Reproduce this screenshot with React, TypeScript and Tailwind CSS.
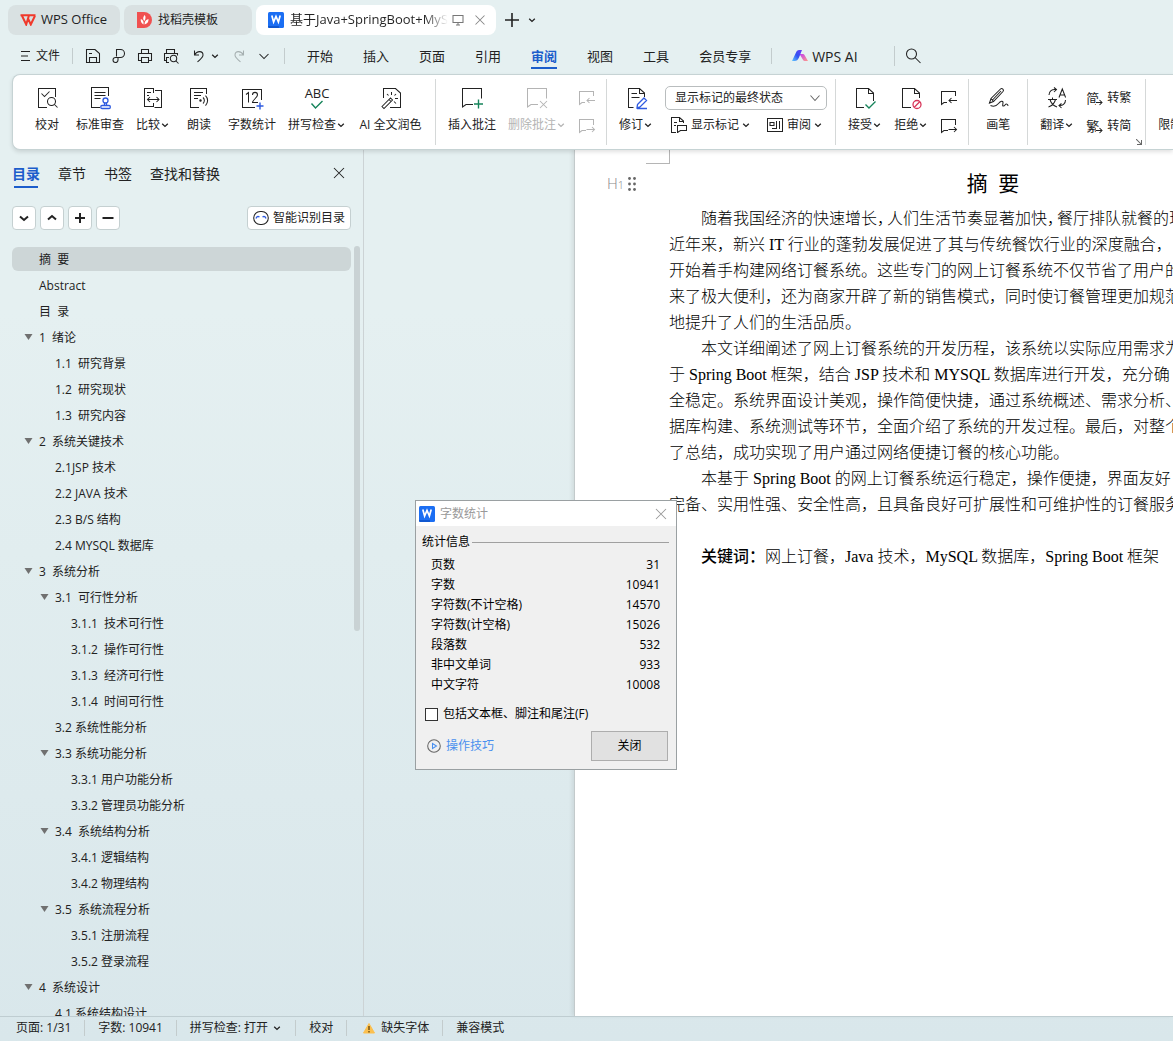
import { useState } from 'react';
import type { ReactNode } from 'react';

type SvgProps = { children: ReactNode; className?: string; box?: number };

function Svg({ children, className = 'size-6', box = 24 }: SvgProps) {
  return (
    <svg
      viewBox={`0 0 ${box} ${box}`}
      className={`shrink-0 ${className}`}
      fill="none"
      stroke="currentColor"
      strokeWidth="1.05"
      aria-hidden="true"
    >
      {children}
    </svg>
  );
}

function Caret() {
  return (
    <Svg box={10} className="size-[10px]">
      <path d="M2.2 3.800 5 6.400l2.800-2.600" strokeWidth="1.350" />
    </Svg>
  );
}

function WriterLogo() {
  return (
    <svg viewBox="0 0 16 16" className="size-4 shrink-0" aria-hidden="true">
      <rect width="16" height="16" rx="1.5" fill="#1b6ef3" />
      <path d="M0 14h11v2H1.500A1.500 1.500 0 0 1 0 14.500z" fill="#0f57d0" />
      <path d="M3.800 3.500 5.600 10 8 4.500 10.400 10l1.800-6.500" fill="none" stroke="#fff" strokeWidth="1.7" />
    </svg>
  );
}

/* Ribbon drawings */
const icons = {
  proof: (
    <Svg>
      <path d="M12 21.500H3.500v-19h17V11M6.500 7.500l3 3 5-5" />
      <circle cx="16.500" cy="15.500" r="4" />
      <path d="m19.500 18.500 3 3" />
    </Svg>
  ),
  standard: (
    <Svg>
      <path d="M12 21.500H3.500v-20h17V10M6.500 6.500h11M6.500 9.500h11M6.500 12.500h6" />
      <g stroke="#2f5be0" strokeWidth="1.300">
        <circle cx="17.500" cy="14.500" r="2.500" />
        <path d="M16.500 17v2.500M18.500 17v2.500" />
        <rect x="12.800" y="19.500" width="9.500" height="3" rx="1.200" />
      </g>
    </Svg>
  ),
  compare: (
    <Svg>
      <path d="M12.500 7V2.500h-9v18h9V17M14 4.500h6.500v17h-7M6 6.500h4M6 9.500h2" />
      <path d="M6.500 13.500h11.500M9 11 6.500 13.500 9 16M15.500 11l2.500 2.500-2.500 2.500" />
    </Svg>
  ),
  read: (
    <Svg>
      <path d="M12 21.500H3.500v-19h16V8M7 6.500h9M7 9.500h7M7 12.500h4" />
      <circle cx="13.500" cy="14.500" r=".7" fill="currentColor" />
      <path d="M16 11.500a4 4 0 0 1 0 6M18.500 9.500a7 7 0 0 1 0 10" />
    </Svg>
  ),
  count: (
    <Svg>
      <path d="M15 21.500H2.500v-18h19V14M6 8.500l2.500-2v10M12.500 9c0-3.500 5-3.500 5 0 0 2.500-5 5-5 7.500h5.500" />
      <path d="M20 16.500v7M16.500 20h7" stroke="#2f5be0" strokeWidth="1.400" />
    </Svg>
  ),
  polish: (
    <Svg>
      <path d="M4.500 12V2.500h12L21.500 7v14.500H11" />
      <path d="m3 20.500 8.500-8.500 2 2L5 22.500zM10 13.500l2 2M12.500 6v3M8 8l1.500 1.500M17 8l-1.500 1.500M16 12.500h3M15 15.500l2 2" />
    </Svg>
  ),
  addNote: (
    <Svg>
      <path d="M21.500 12.500v-10h-19v18.500L6 18.500h7" />
      <path d="M18.500 13.500v9M14 18h9" stroke="#16845b" strokeWidth="1.400" />
    </Svg>
  ),
  delNote: (
    <Svg>
      <path d="M21.500 12.500v-10h-19v18.500L6 18.500h7M15 15l7 7M22 15l-7 7" />
    </Svg>
  ),
  revise: (
    <Svg>
      <path d="M9.500 21.500h-5v-19h11L20.500 7v4M15.500 2.500v5h5M7.500 7.500H13M7.500 11.500h8" />
      <path d="m13.500 18.500 6.500-6.500 2.500 2.500L16 21l-3 .8zM13 22.500h10" stroke="#2f5be0" strokeWidth="1.300" />
    </Svg>
  ),
  accept: (
    <Svg>
      <path d="M11 21.500H3.500v-19h12L20.500 7v8M15.500 2.500v5h5" />
      <path d="m12.500 18.500 3.500 3.500 6.500-6.500" stroke="#16845b" strokeWidth="1.400" />
    </Svg>
  ),
  reject: (
    <Svg>
      <path d="M12 21.500H3.500v-19h12L20.500 7v5M15.500 2.500v5h5" />
      <g stroke="#d8375a" strokeWidth="1.300">
        <circle cx="18" cy="18.500" r="4" />
        <path d="m15.300 21.300 5.400-5.600" />
      </g>
    </Svg>
  ),
  brush: (
    <Svg>
      <path d="m3.500 17 1.500-4.500L14.500 3c1.500-1.500 4 .8 2.500 2.500L7.500 15.500zM5 12.500l2.500 3M6.500 14 15 5" />
      <path d="M4.500 19.500c3.500 1.500 6 .5 8-2s4.500-3 4.500-1-1 3.500.5 3.500 1.500-2 3-2 1.500 1 1.500 2" />
    </Svg>
  ),
  translate: (
    <Svg>
      <path d="M4 9c0-4 3-6 7-5.500M9 1.500l2.500 2L9 6M20.500 14c0 4-3 6-6.500 5.500M16.500 17.500l-2.500 2 2.500 2.500M14 11.500l3.300-8.500 3.300 8.500M15.200 9h4.300M3 13.500h9M7.500 11.500v2M5 13.500c1 4 3 6 7 7.500M10.500 13.500c-1 4-3 6-7 7.500" />
    </Svg>
  ),
  restrict: (
    <Svg>
      <path d="M12 2.500h8.500v19h-17V9.500" />
    </Svg>
  ),
};

function Spelling() {
  return (
    <span className="flex h-6 flex-col items-center text-[13px] leading-[15px]">
      ABC
      <Svg className="-mt-1 size-3.5" box={14}>
        <path d="m1.500 6.500 4 4.500 7-7" stroke="#16845b" strokeWidth="1.400" />
      </Svg>
    </span>
  );
}

type ToolProps = { icon: ReactNode; label: string; menu?: boolean; disabled?: boolean; wide?: boolean };

function Tool({ icon, label, menu, disabled, wide }: ToolProps) {
  return (
    <button
      disabled={disabled}
      className={`flex shrink-0 flex-col items-center gap-[5px] whitespace-nowrap ${wide ? 'min-w-[65px]' : 'min-w-[34px]'} ${
        disabled ? 'text-[#b4b4b4]' : ''
      }`}
    >
      {icon}
      <span className="flex items-center leading-5">
        {label}
        {menu && <Caret />}
      </span>
    </button>
  );
}

function NoteStep({ next }: { next?: boolean }) {
  return (
    <Svg className="size-[18px]" box={18}>
      <path d={next ? 'M15.500 8V2.500h-14v13L4 13.500h4' : 'M15.500 7V2.500h-14v13L4 13.500h3'} />
      <path d={next ? 'M8.500 12.500h8M14 10l2.500 2.500L14 15' : 'M17 11.500H9M11.500 9 9 11.500l2.500 2.500'} />
    </Svg>
  );
}

function NoteSteps({ disabled }: { disabled?: boolean }) {
  return (
    <div className={`flex w-4 shrink-0 flex-col gap-[10px] pt-[3px] ${disabled ? 'text-[#b4b4b4]' : ''}`}>
      <button disabled={disabled} aria-label="上一条">
        <NoteStep />
      </button>
      <button disabled={disabled} aria-label="下一条">
        <NoteStep next />
      </button>
    </div>
  );
}

function Divider({ children }: { children?: ReactNode }) {
  return <div className="relative -mt-[7px] h-[66px] w-px shrink-0 bg-[#d5d8d8]">{children}</div>;
}

function MenuDivider() {
  return <div className="h-4 w-px shrink-0 bg-[#c3cccd]" />;
}

function Convert({ glyph, label }: { glyph: string; label: string }) {
  return (
    <button className="flex items-center gap-1 leading-5">
      <span className="relative w-[17px] text-left text-[13px]">
        {glyph}
        <Svg className="absolute right-0 bottom-0.5 size-[7px] bg-white" box={7}>
          <path d="M0 3.500h6M3.500 1 6 3.500 3.500 6" />
        </Svg>
      </span>
      {label}
    </button>
  );
}

function TabBar() {
  return (
    <div className="flex h-10 shrink-0 items-center gap-1 px-2 text-[12px]">
      <button className="flex h-[30px] w-28 items-center gap-[5px] rounded-lg bg-[#d9e1e2] pl-3 text-[13px] whitespace-nowrap">
        <svg viewBox="0 0 16 12" className="h-3 w-4" fill="none" stroke="#f0392b" strokeWidth="2" aria-hidden="true">
          <path d="M.5 1.200H9L6.200 10.500 2 1.800M15.500 1.200H9.500M15 1.800l-4.200 8.700L8 4.500" />
        </svg>
        WPS Office
      </button>
      <button className="flex h-[30px] w-32 items-center gap-1.5 rounded-lg bg-[#d9e1e2] pl-3">
        <svg viewBox="0 0 16 16" className="size-4" aria-hidden="true">
          <path d="M1 0h7a8 8 0 0 1 0 16H1z" fill="#f05050" />
          <path d="M7.500 12.500C5 11 4.500 9 4.800 7 7 8 8 9.500 7.500 12.500zM7.500 8C6.800 6 7.500 4 8.800 3c1.200 2 .8 4-.3 6zM8.500 12.500c0-3 1.500-5 4-5.500.3 3-1.500 5-4 5.500z" fill="#fff" />
        </svg>
        找稻壳模板
      </button>
      <div className="flex h-[30px] w-60 items-center rounded-lg bg-white pl-3">
        <WriterLogo />
        <span className="ml-1.5 w-[158px] overflow-hidden bg-linear-to-r from-[#222] from-85% to-transparent bg-clip-text text-[13px] whitespace-nowrap text-transparent">
          基于Java+SpringBoot+MySQL
        </span>
        <Svg className="ml-1 size-3 text-[#777]" box={12}>
          <path d="M1 1.500h10v7H1zM4 11h4M6 8.500V11" />
        </Svg>
        <button aria-label="关闭标签" className="ml-2 text-[#888]">
          <Svg className="size-4" box={16}>
            <path d="m3.500 3.500 9 9M12.500 3.500l-9 9" />
          </Svg>
        </button>
      </div>
      <button aria-label="新建" className="ml-1">
        <Svg className="size-4" box={16}>
          <path d="M8 1v14M1 8h14" strokeWidth="1.600" />
        </Svg>
      </button>
      <button aria-label="标签列表" className="ml-[3px]">
        <Caret />
      </button>
    </div>
  );
}

const menus = ['开始', '插入', '页面', '引用', '审阅', '视图', '工具', '会员专享'];

function MenuBar() {
  const [active, setActive] = useState('审阅');
  return (
    <div className="mb-0.5 flex h-8 shrink-0 items-center text-[12px]">
      <button className="ml-5 flex items-center gap-1.5">
        <Svg className="size-[10px]" box={10}>
          <path d="M1 .5h9M1 5h7M1 9.500h9" />
        </Svg>
        文件
      </button>
      <div className="ml-3 flex items-center">
        <MenuDivider />
        <button aria-label="保存" className="ml-3">
          <Svg className="size-4" box={16}>
            <path d="M1.500 1.500H10L14.500 5.500v9h-13zM4.500 14.500v-5h7v5M4 5.500h3" />
          </Svg>
        </button>
        <button aria-label="输出为PDF" className="ml-[10px]">
          <Svg className="size-4" box={16}>
            <path d="M5.500 8.500v-7h4a3.700 3.700 0 0 1 0 8H4.500a2.500 2.500 0 1 0 2.500 2.500V9.500" />
          </Svg>
        </button>
        <button aria-label="打印" className="ml-[10px]">
          <Svg className="size-4" box={16}>
            <path d="M4.500 5V1.500h7V5M4 12.500H1.500v-7h13v7H12M4.500 9.500h7v5h-7z" />
          </Svg>
        </button>
        <button aria-label="打印预览" className="ml-[10px]">
          <Svg className="size-4" box={16}>
            <path d="M3.500 5V1.500h8V5M3.500 12.500h-2v-7h13v2M6 14.500H3.500v-5H6" />
            <circle cx="10.500" cy="10.500" r="3.200" />
            <path d="m13 13 2.500 2.500" />
          </Svg>
        </button>
        <button aria-label="撤销" className="ml-[13px] flex items-center gap-1">
          <Svg className="size-[14px]" box={14}>
            <path d="M2.500 1.500v4.500H7M2.500 6c2.500-4.500 8.500-4.500 8.500 0 0 2.500-2.500 4-5.500 7" />
          </Svg>
          <Caret />
        </button>
        <button aria-label="重做" disabled className="ml-3 text-[#a5afb0]">
          <Svg className="size-[14px]" box={14}>
            <path d="M11.500 1.500v4.500H7M11.500 6C9 1.500 3 1.500 3 6c0 2.500 2.500 4 5.500 7" />
          </Svg>
        </button>
        <button aria-label="更多" className="mr-[14px] ml-3">
          <Svg className="size-3" box={12}>
            <path d="m1.500 4 4.500 4.500L10.500 4" />
          </Svg>
        </button>
        <MenuDivider />
      </div>
      <nav className="ml-[22px] flex items-center gap-[30px] text-[13px]">
        {menus.map((m) => (
          <button
            key={m}
            onClick={() => setActive(m)}
            className={`border-b-2 pt-0.5 leading-[22px] whitespace-nowrap ${
              m === active ? 'border-[#1c5dcb] font-bold text-[#1c5dcb]' : 'border-transparent'
            }`}
          >
            {m}
          </button>
        ))}
      </nav>
      <div className="ml-5 flex shrink-0 items-center">
        <MenuDivider />
        <button className="ml-5 flex items-center gap-1 text-[14px] whitespace-nowrap">
          <svg viewBox="0 0 16 12" className="h-3 w-4" aria-hidden="true">
            <defs>
              <linearGradient id="aiBlue" x1="0" y1="1" x2="1" y2="0">
                <stop offset="0" stopColor="#5ec8ff" />
                <stop offset=".5" stopColor="#3352f2" />
                <stop offset="1" stopColor="#6a3cf5" />
              </linearGradient>
              <linearGradient id="aiPink" x1="0" y1="0" x2="1" y2="1">
                <stop offset="0" stopColor="#c03cf0" />
                <stop offset="1" stopColor="#ff9a8a" />
              </linearGradient>
            </defs>
            <path d="M7.500 4h3.500q1 0 1.500 1l3.500 6h-3q-1.500 0-2.200-1.500z" fill="url(#aiPink)" />
            <path d="M0 11 4.500 1.500Q5.200 0 7 0h3L7 7.500Q5.500 11 2.500 11z" fill="url(#aiBlue)" />
          </svg>
          WPS AI
        </button>
        <div className="ml-9 h-5 w-px bg-[#c3cccd]" />
        <button aria-label="搜索" className="ml-[10px]">
          <Svg className="size-4" box={16}>
            <circle cx="6.500" cy="6" r="5" />
            <path d="m10 9.500 5.500 5.500" />
          </Svg>
        </button>
      </div>
    </div>
  );
}

function Ribbon() {
  return (
    <div className="relative z-10 ml-3 flex h-[76px] shrink-0 items-start gap-3 overflow-hidden rounded-l-lg border border-r-0 border-[#c6d3d4] bg-white pt-[11px] pl-[17px] text-[12px] shadow-[0_2px_4px_rgba(0,0,0,0.12)]">
      <Tool icon={icons.proof} label="校对" />
      <Tool icon={icons.standard} label="标准审查" />
      <Tool icon={icons.compare} label="比较" menu />
      <Tool icon={icons.read} label="朗读" />
      <Tool icon={icons.count} label="字数统计" />
      <Tool icon={<Spelling />} label="拼写检查" menu />
      <Tool icon={icons.polish} label="AI 全文润色" wide />
      <Divider />
      <Tool icon={icons.addNote} label="插入批注" />
      <Tool icon={icons.delNote} label="删除批注" menu disabled />
      <NoteSteps disabled />
      <Divider />
      <Tool icon={icons.revise} label="修订" menu />
      <div className="flex w-[162px] shrink-0 flex-col gap-1.5">
        <div className="relative">
          <select
            aria-label="标记显示方式"
            className="h-6 w-full appearance-none rounded-[5px] border border-[#b9bdbe] bg-white pl-[9px] text-[12px]"
          >
            <option>显示标记的最终状态</option>
          </select>
          <Svg className="pointer-events-none absolute top-[7px] right-[7px] size-[10px] text-[#666]" box={10}>
            <path d="m.5 2.500 4.500 5 4.500-5" />
          </Svg>
        </div>
        <div className="flex items-center justify-between pl-1.5 whitespace-nowrap">
          <button className="flex items-center gap-1">
            <Svg className="size-4" box={16}>
              <path d="M5 15.500H.5V.5h8L12.500 4v2M8.500.5v4h4M3 5.500h3M3 8.500h2M6.500 8.500h9v5h-6L6.500 15.500z" />
            </Svg>
            <span className="flex items-center gap-0.5">
              显示标记
              <Caret />
            </span>
          </button>
          <button className="flex items-center gap-1 pr-1">
            <Svg className="size-4" box={16}>
              <path d="M.5 1.500h15v13H.5zM9.500 4v7.500H5M3 5.500h4v3H3zM12.500 4v8" />
            </Svg>
            <span className="flex items-center gap-0.5">
              审阅
              <Caret />
            </span>
          </button>
        </div>
      </div>
      <div className="-ml-1">
        <Divider />
      </div>
      <Tool icon={icons.accept} label="接受" menu />
      <Tool icon={icons.reject} label="拒绝" menu />
      <NoteSteps />
      <Divider />
      <Tool icon={icons.brush} label="画笔" />
      <Divider />
      <Tool icon={icons.translate} label="翻译" menu />
      <div className="flex shrink-0 flex-col gap-2 pt-0.5 pr-0.5 whitespace-nowrap">
        <Convert glyph="简" label="转繁" />
        <Convert glyph="繁" label="转简" />
      </div>
      <Divider>
        <Svg className="absolute right-1 bottom-0 size-[6px] text-[#666]" box={6}>
          <path d="m0 0 5 5M5.500 1v4.500H1" />
        </Svg>
      </Divider>
      <Tool icon={icons.restrict} label="限制编辑" />
    </div>
  );
}

type Heading = { level: 0 | 1 | 2; text: string; open?: boolean };

const outline: Heading[] = [
  { level: 0, text: '摘  要' },
  { level: 0, text: 'Abstract' },
  { level: 0, text: '目  录' },
  { level: 0, text: '1  绪论', open: true },
  { level: 1, text: '1.1  研究背景' },
  { level: 1, text: '1.2  研究现状' },
  { level: 1, text: '1.3  研究内容' },
  { level: 0, text: '2  系统关键技术', open: true },
  { level: 1, text: '2.1JSP 技术' },
  { level: 1, text: '2.2 JAVA 技术' },
  { level: 1, text: '2.3 B/S 结构' },
  { level: 1, text: '2.4 MYSQL 数据库' },
  { level: 0, text: '3  系统分析', open: true },
  { level: 1, text: '3.1  可行性分析', open: true },
  { level: 2, text: '3.1.1  技术可行性' },
  { level: 2, text: '3.1.2  操作可行性' },
  { level: 2, text: '3.1.3  经济可行性' },
  { level: 2, text: '3.1.4  时间可行性' },
  { level: 1, text: '3.2 系统性能分析' },
  { level: 1, text: '3.3 系统功能分析', open: true },
  { level: 2, text: '3.3.1 用户功能分析' },
  { level: 2, text: '3.3.2 管理员功能分析' },
  { level: 1, text: '3.4  系统结构分析', open: true },
  { level: 2, text: '3.4.1 逻辑结构' },
  { level: 2, text: '3.4.2 物理结构' },
  { level: 1, text: '3.5  系统流程分析', open: true },
  { level: 2, text: '3.5.1 注册流程' },
  { level: 2, text: '3.5.2 登录流程' },
  { level: 0, text: '4  系统设计', open: true },
  { level: 1, text: '4.1 系统结构设计' },
];

const indents = ['pl-3', 'pl-7', 'pl-11'];

const treeButtons = [
  { label: '展开', d: 'm3 5.500 4 3.500 4-3.500' },
  { label: '收起', d: 'm3 8.500 4-3.500 4 3.500' },
  { label: '增加级别', d: 'M7 2v10M2 7h10' },
  { label: '减少级别', d: 'M1.500 7h11' },
];

function Sidebar() {
  const [selected, setSelected] = useState(0);
  return (
    <aside className="flex w-[364px] shrink-0 flex-col border-r border-[#ccd3d5] text-[12px]">
      <div className="flex h-12 shrink-0 items-center gap-[18px] pr-[18px] pb-0.5 pl-3 text-[14px]">
        <button className="relative font-bold text-[#1c5dcb]">
          目录
          <span className="absolute inset-x-0.5 -bottom-1 h-0.5 bg-[#1c5dcb]"></span>
        </button>
        <button>章节</button>
        <button>书签</button>
        <button>查找和替换</button>
        <button aria-label="关闭窗格" className="ml-auto">
          <Svg className="size-3" box={12}>
            <path d="m1 1 10 10M11 1 1 11" />
          </Svg>
        </button>
      </div>
      <div className="flex h-10 shrink-0 items-center gap-1 pr-3 pl-3">
        {treeButtons.map((b) => (
          <button
            key={b.label}
            aria-label={b.label}
            className="flex size-6 items-center justify-center rounded border border-[#c5d0d1] bg-white"
          >
            <Svg className="size-3.5" box={14}>
              <path d={b.d} strokeWidth="2" />
            </Svg>
          </button>
        ))}
        <button className="ml-auto flex h-6 items-center gap-1 rounded border border-[#c5d0d1] bg-white px-[5px]">
          <Svg className="size-4" box={16}>
            <rect x=".7" y="1.500" width="14.600" height="13" rx="6.500" />
            <path d="M3 8.500q1-3 3.500-1.500M13 8.500q-1-3-3.500-1.500" stroke="#2f5be0" strokeWidth="1.300" />
          </Svg>
          智能识别目录
        </button>
      </div>
      <div className="flex min-h-0 flex-1 overflow-hidden pt-2 pl-3">
        <ul className="min-w-0 flex-1">
          {outline.map((h, i) => (
            <li key={h.text} className="h-[26px] py-px">
              <button
                onClick={() => setSelected(i)}
                className={`flex h-6 w-full items-center gap-1.5 rounded-md pt-0.5 whitespace-pre ${indents[h.level]} ${
                  i === selected ? 'bg-[#cdd6d7]' : ''
                }`}
              >
                <svg viewBox="0 0 9 8" className="h-2 w-[9px]" fill="#707070" aria-hidden="true">
                  {h.open && <path d="M.5 0h8l-4 6z" />}
                </svg>
                {h.text}
              </button>
            </li>
          ))}
        </ul>
        <div className="mr-[3px] ml-[3px] h-[385px] w-1.5 rounded-full bg-[#c9d2d4]" />
      </div>
    </aside>
  );
}

/* Full stop or comma set at half width */
function Half({ children }: { children: string }) {
  return <span className="mr-0.5 [font-feature-settings:'halt']">{children}</span>;
}

const lines: { indent?: boolean; text: ReactNode }[] = [
  {
    indent: true,
    text: (
      <>
        随着我国经济的快速增长<Half>，</Half>人们生活节奏显著加快<Half>，</Half>餐厅排队就餐的现
      </>
    ),
  },
  { text: '近年来，新兴 IT 行业的蓬勃发展促进了其与传统餐饮行业的深度融合，' },
  { text: '开始着手构建网络订餐系统。这些专门的网上订餐系统不仅节省了用户的' },
  { text: '来了极大便利，还为商家开辟了新的销售模式，同时使订餐管理更加规范' },
  { text: '地提升了人们的生活品质。' },
  { indent: true, text: '本文详细阐述了网上订餐系统的开发历程，该系统以实际应用需求为' },
  { text: '于 Spring Boot 框架，结合 JSP 技术和 MYSQL 数据库进行开发，充分确' },
  { text: '全稳定。系统界面设计美观，操作简便快捷，通过系统概述、需求分析、' },
  { text: '据库构建、系统测试等环节，全面介绍了系统的开发过程。最后，对整个' },
  { text: '了总结，成功实现了用户通过网络便捷订餐的核心功能。' },
  { indent: true, text: '本基于 Spring Boot 的网上订餐系统运行稳定，操作便捷，界面友好' },
  { text: '完备、实用性强、安全性高，且具备良好可扩展性和可维护性的订餐服务' },
  { text: ' ' },
  {
    indent: true,
    text: (
      <>
        <b className="font-medium">关键词：</b>网上订餐，Java 技术，MySQL 数据库，Spring Boot 框架
      </>
    ),
  },
];

function DocumentPage() {
  return (
    <main
      lang="zh-CN"
      className="min-w-0 flex-1 overflow-hidden border-l border-[#c3cacb] bg-white font-['Liberation_Serif','Noto_Sans_CJK_SC',serif] text-[16px] leading-[26px] text-black shadow-[-2px_0_4px_rgba(0,0,0,0.08)]"
    >
      <div className="ml-[71px] h-[14px] w-6 border-r border-b border-[#b5b5b5]" />
      <div className="flex h-[42px] items-center pb-0.5">
        <div className="flex w-[94px] shrink-0 items-center gap-1 pl-8 text-[#888]">
          <span className="font-['Open_Sans',sans-serif] text-[15px] font-light">
            H<span className="text-[11px]">1</span>
          </span>
          <svg viewBox="0 0 8 14" className="h-3.5 w-2" fill="#666" aria-hidden="true">
            {[1.5, 7, 12.5].map((y) => (
              <g key={y}>
                <circle cx="1.500" cy={y} r="1.400" />
                <circle cx="6.500" cy={y} r="1.400" />
              </g>
            ))}
          </svg>
        </div>
        <h1 className="w-[648px] shrink-0 text-center text-[21px] font-normal whitespace-pre">摘  要</h1>
      </div>
      <div className="pl-[94px] font-light whitespace-pre">
        {lines.map((line, i) => (
          <p key={i} className={line.indent ? 'indent-8' : ''}>
            {line.text}
          </p>
        ))}
      </div>
    </main>
  );
}

const stats = [
  ['页数', 31],
  ['字数', 10941],
  ['字符数(不计空格)', 14570],
  ['字符数(计空格)', 15026],
  ['段落数', 532],
  ['非中文单词', 933],
  ['中文字符', 10008],
];

function WordCountDialog() {
  return (
    <div
      role="dialog"
      aria-label="字数统计"
      className="absolute top-[500px] left-[415px] z-20 w-[262px] border border-[#9aa0a2] bg-[#f0f0f0] text-[12px] text-black"
    >
      <div className="flex h-[25px] items-center gap-[5px] bg-white px-[3px] text-[#999]">
        <WriterLogo />
        字数统计
        <button aria-label="关闭对话框" className="mr-1.5 ml-auto">
          <Svg className="size-3" box={12}>
            <path d="m1 1 10 10M11 1 1 11" />
          </Svg>
        </button>
      </div>
      <div className="flex items-center gap-0.5 pt-1.5 pr-[7px] pl-1.5 leading-5">
        统计信息
        <div className="h-px flex-1 bg-[#a0a0a0]" />
      </div>
      <table className="mt-[3px] w-full">
        <tbody>
          {stats.map(([label, value]) => (
            <tr key={label}>
              <th scope="row" className="p-0 pl-[15px] text-left leading-5 font-normal">
                {label}
              </th>
              <td className="p-0 pr-4 text-right leading-5">{value}</td>
            </tr>
          ))}
        </tbody>
      </table>
      <label className="mt-[9px] flex items-center gap-[5px] pl-[9px] leading-5">
        <input type="checkbox" className="size-[13px] appearance-none border border-[#333] bg-white checked:bg-[#1b6ef3]" />
        包括文本框、脚注和尾注(F)
      </label>
      <div className="mt-[7px] mb-2 flex items-center justify-between pr-2 pl-[11px]">
        <a href="#tips" className="flex items-center gap-[5px] text-[#4a90ee]">
          <Svg className="size-[14px]" box={14}>
            <circle cx="7" cy="7" r="6.300" stroke="#666" />
            <path d="M5.500 4.500v5L9.500 7z" />
          </Svg>
          操作技巧
        </a>
        <button className="h-[30px] w-[77px] border border-[#adadad] bg-[#e1e1e1]">关闭</button>
      </div>
    </div>
  );
}

function StatusBar() {
  return (
    <footer className="flex h-[25px] shrink-0 items-center gap-[13px] border-t border-[#bfcdd1] pb-0.5 pl-4 text-[12px] whitespace-nowrap">
      <span>页面: 1/31</span>
      <MenuDivider />
      <span>字数: 10941</span>
      <MenuDivider />
      <button className="flex items-center gap-1">
        拼写检查: 打开
        <Caret />
      </button>
      <MenuDivider />
      <button>校对</button>
      <MenuDivider />
      <button className="flex items-center gap-[5px] pl-0.5">
        <svg viewBox="0 0 14 12" className="h-3 w-3.5" aria-hidden="true">
          <path d="M7 1.500 12.500 11H1.500z" fill="#fcc04f" stroke="#fcc04f" strokeLinejoin="round" />
          <path d="M7 4v4M7 9v1.500" stroke="#6b4b10" strokeWidth="1.400" />
        </svg>
        缺失字体
      </button>
      <MenuDivider />
      <span>兼容模式</span>
    </footer>
  );
}

export default function App() {
  return (
    <div
      lang="zh-CN"
      className="relative flex h-screen flex-col overflow-hidden bg-linear-to-b from-[#e5f0f1] from-30% to-[#d9e7eb] font-['Open_Sans','Noto_Sans_CJK_SC',sans-serif] text-[#222]"
    >
      <TabBar />
      <MenuBar />
      <Ribbon />
      <div className="flex min-h-0 flex-1">
        <Sidebar />
        <div className="w-[210px] shrink-0" />
        <DocumentPage />
      </div>
      <StatusBar />
      <WordCountDialog />
    </div>
  );
}
